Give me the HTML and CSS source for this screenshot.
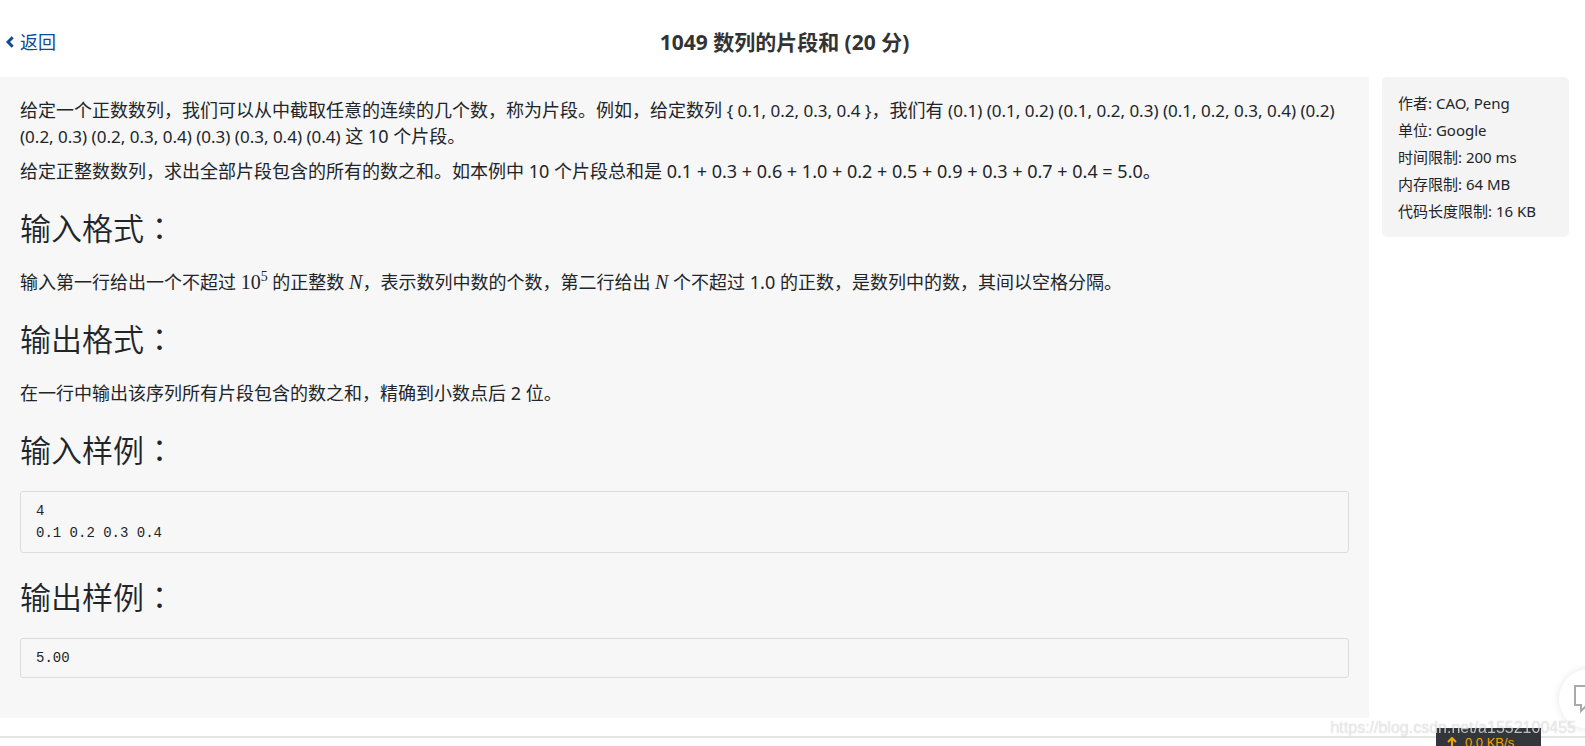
FILE: index.html
```html
<!DOCTYPE html>
<html lang="zh-CN">
<head>
    <meta charset="UTF-8">
    <meta name="viewport" content="width=device-width, initial-scale=1.0">
    <title>1049 数列的片段和 (20 分)</title>
    <link rel="stylesheet" href="styles.css">
</head>
<body>
    <header class="topbar">
        <a class="back" href="#">
            <svg class="back-icon" viewBox="0 0 8 12" aria-hidden="true"><path d="M6.7 1.3 2 6l4.7 4.7"/></svg>
            <span>返回</span>
        </a>
        <h1 class="title">1049 数列的片段和 (20 分)</h1>
    </header>

    <div class="content">
        <main class="problem">
            <p>给定一个正数数列，我们可以从中截取任意的连续的几个数，称为片段。例如，给定数列 <span class="seq">{ 0.1, 0.2, 0.3, 0.4 }</span>，我们有 <span class="seq">(0.1) (0.1, 0.2) (0.1, 0.2, 0.3) (0.1, 0.2, 0.3, 0.4) (0.2) (0.2, 0.3) (0.2, 0.3, 0.4) (0.3) (0.3, 0.4) (0.4)</span> 这 10 个片段。</p>
            <p>给定正整数数列，求出全部片段包含的所有的数之和。如本例中 10 个片段总和是 0.1 + 0.3 + 0.6 + 1.0 + 0.2 + 0.5 + 0.9 + 0.3 + 0.7 + 0.4 = 5.0。</p>

            <h2>输入格式<span class="colon" lang="zh-TW">：</span></h2>
            <p>输入第一行给出一个不超过 <span class="math">10<sup>5</sup></span> 的正整数 <i class="math">N</i>，表示数列中数的个数，第二行给出 <i class="math">N</i> 个不超过 1.0 的正数，是数列中的数，其间以空格分隔。</p>

            <h2>输出格式<span class="colon" lang="zh-TW">：</span></h2>
            <p>在一行中输出该序列所有片段包含的数之和，精确到小数点后 2 位。</p>

            <h2>输入样例<span class="colon" lang="zh-TW">：</span></h2>
            <pre>4
0.1 0.2 0.3 0.4</pre>

            <h2>输出样例<span class="colon" lang="zh-TW">：</span></h2>
            <pre>5.00</pre>
        </main>

        <aside class="info">
            <div>作者: CAO, Peng</div>
            <div>单位: Google</div>
            <div>时间限制: 200 ms</div>
            <div>内存限制: 64 MB</div>
            <div>代码长度限制: 16 KB</div>
        </aside>
    </div>

    <footer class="bottom"></footer>

    <button class="chat" aria-label="反馈">
        <svg viewBox="0 0 30 30" aria-hidden="true"><path d="M1 2h28v19H13l-6 6v-6H1z"/></svg>
    </button>

    <div class="net-speed">
        <svg viewBox="0 0 10 12" aria-hidden="true"><path d="M5 12V1M1 5l4-4 4 4"/></svg>
        <span>0.0 KB/s</span>
    </div>
    <div class="watermark">https://blog.csdn.net/a1552100455</div>
</body>
</html>
```

FILE: styles.css
```css
* {
    box-sizing: border-box;
}
body {
    margin: 0;
    height: 100vh;
    overflow: hidden;
    background-color: #fff;
    color: #212529;
    font-family: "Noto Sans", "Noto Sans CJK SC", sans-serif;
    font-size: 18px;
    line-height: 26px;
}
.topbar {
    display: grid;
    grid-template-columns: 1fr auto 1fr;
    align-items: center;
    height: 77px;
    padding: 6px 22px 0 6px;
}
.back {
    display: flex;
    align-items: center;
    gap: 6px;
    color: #0d4a92;
    text-decoration: none;
}
.back-icon {
    width: 8px;
    height: 12px;
    fill: none;
    stroke: #0d4a92;
    stroke-width: 3;
}
.title {
    margin: 0;
    color: #333;
    font-size: 21px;
    font-weight: bold;
}
.content {
    display: flex;
    align-items: flex-start;
    gap: 13px;
    padding-right: 16px;
}
.problem {
    flex: 1;
    padding: 20px 20px 40px;
    background-color: #f7f7f7;
}
.problem p {
    margin: 0 0 9px;
}
.problem h2 {
    margin: 24px 0 22px;
    font-size: 31px;
    font-weight: 350;
    line-height: 37px;
}
.colon {
    font-family: "Noto Sans CJK TC", sans-serif;
}
.seq {
    font-size: 17px;
    line-height: 20px;
}
.math {
    font-family: "Liberation Serif", serif;
    font-size: 20px;
    line-height: 20px;
}
.math sup {
    font-size: 14px;
    line-height: 1;
}
.problem pre {
    margin: 0;
    padding: 8px 15px;
    border: 1px solid #dcdcdc;
    border-radius: 3px;
    font-family: "Liberation Mono", monospace;
    font-size: 14px;
    line-height: 22px;
}
.info {
    width: 187px;
    padding: 13px 16px 12px;
    border-radius: 5px;
    background-color: #f4f4f4;
    font-size: 15px;
    line-height: 27px;
}
.bottom {
    height: 20px;
    border-bottom: 2px solid #e4e4e4;
}
.chat {
    position: fixed;
    right: -34px;
    bottom: 17px;
    width: 60px;
    height: 60px;
    padding: 15px;
    border: none;
    border-radius: 50%;
    background-color: #fff;
    box-shadow: 0 0 8px rgba(0, 0, 0, 0.1);
}
.chat svg {
    display: block;
    fill: none;
    stroke: #aaa;
    stroke-width: 2;
}
.net-speed {
    position: fixed;
    right: 44px;
    bottom: -12px;
    display: flex;
    align-items: center;
    gap: 8px;
    width: 105px;
    height: 30px;
    padding-left: 11px;
    background-color: #33373b;
    color: #f5a300;
    font-family: "Liberation Sans", sans-serif;
    font-size: 13px;
}
.net-speed svg {
    width: 10px;
    height: 12px;
    fill: none;
    stroke: #f5a300;
    stroke-width: 2;
}
.watermark {
    position: fixed;
    right: 9px;
    bottom: 5px;
    color: rgba(255, 255, 255, 0.7);
    font-family: "Liberation Sans", sans-serif;
    font-size: 16px;
    text-shadow: 0 0 1px rgba(0, 0, 0, 0.3);
}
```
